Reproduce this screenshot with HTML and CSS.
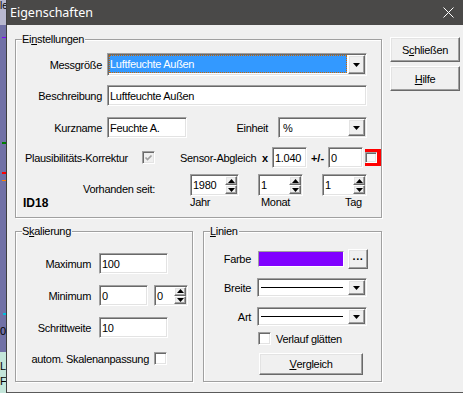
FILE: index.html
```html
<!DOCTYPE html>
<html lang="de">
<head>
    <meta charset="UTF-8">
    <title>Eigenschaften</title>
    <link rel="stylesheet" href="styles.css">
</head>
<body>

<div class="screen">
    <!-- window behind the dialog -->
    <div class="bgwin">
        <div class="bg-top">le</div>
        <div class="bg-chart">
            <div class="mark m-violet"></div>
            <div class="mark m-green"></div>
            <div class="mark m-red"></div>
            <div class="mark m-orange"></div>
            <div class="mark m-cyan"></div>
            <div class="bg-zero">0</div>
        </div>
        <div class="bg-legend"><div>L</div><div>F</div></div>
    </div>

    <div class="dialog">
        <div class="titlebar">
            <span class="title">Eigenschaften</span>
            <svg class="close" width="11" height="11" viewBox="0 0 11 11">
                <path d="M0.5 0.5L10.5 10.5M10.5 0.5L0.5 10.5" stroke="#fff" stroke-width="1" fill="none"/>
            </svg>
        </div>

        <div class="client">
            <div class="main">
                <div class="group g-settings">
                    <div class="legend">Ei<u>n</u>stellungen</div>

                    <div class="row h23 mt7">
                        <span class="lbl lbl-set">Messgröße</span>
                        <div class="combo selected w260">
                            <div class="combo-text">Luftfeuchte Außen</div>
                            <div class="btn drop"><svg width="7" height="4" viewBox="0 0 7 4"><path d="M0 0h7L3.5 4z"/></svg></div>
                        </div>
                    </div>

                    <div class="row h21 mt9">
                        <span class="lbl lbl-set">Beschreibung</span>
                        <div class="field w260">Luftfeuchte Außen</div>
                    </div>

                    <div class="row h21 mt11">
                        <span class="lbl lbl-set">Kurzname</span>
                        <div class="field w80">Feuchte A.</div>
                        <span class="lbl lbl-unit">Einheit</span>
                        <div class="combo w89">
                            <div class="combo-text">%</div>
                            <div class="btn drop"><svg width="7" height="4" viewBox="0 0 7 4"><path d="M0 0h7L3.5 4z"/></svg></div>
                        </div>
                    </div>

                    <div class="row h21 mt9">
                        <span class="lbl lbl-plaus">Plausibilitäts-Korrektur</span>
                        <div class="chk disabled">
                            <svg width="11" height="11" viewBox="0 0 11 11"><path d="M2.5 5.5L4.5 7.5L8.5 3.5" stroke="#a0a0a0" stroke-width="1.7" fill="none"/></svg>
                        </div>
                        <span class="lbl lbl-sensor">Sensor-Abgleich</span>
                        <span class="op op-x">x</span>
                        <div class="field w35">1.040</div>
                        <span class="op op-pm">+/-</span>
                        <div class="field w35">0</div>
                        <div class="redframe"><div class="chk small"></div></div>
                    </div>

                    <div class="row h22 mt6">
                        <span class="lbl lbl-since">Vorhanden seit:</span>
                        <div class="spin w49">
                            <div class="spin-text">1980</div>
                            <div class="spin-btns">
                                <div class="btn sb"><svg width="7" height="4" viewBox="0 0 7 4"><path d="M3.5 0L7 4H0z"/></svg></div>
                                <div class="btn sb"><svg width="7" height="4" viewBox="0 0 7 4"><path d="M0 0h7L3.5 4z"/></svg></div>
                            </div>
                        </div>
                        <div class="spin w45 ml19">
                            <div class="spin-text">1</div>
                            <div class="spin-btns">
                                <div class="btn sb"><svg width="7" height="4" viewBox="0 0 7 4"><path d="M3.5 0L7 4H0z"/></svg></div>
                                <div class="btn sb"><svg width="7" height="4" viewBox="0 0 7 4"><path d="M0 0h7L3.5 4z"/></svg></div>
                            </div>
                        </div>
                        <div class="spin w45 ml19">
                            <div class="spin-text">1</div>
                            <div class="spin-btns">
                                <div class="btn sb"><svg width="7" height="4" viewBox="0 0 7 4"><path d="M3.5 0L7 4H0z"/></svg></div>
                                <div class="btn sb"><svg width="7" height="4" viewBox="0 0 7 4"><path d="M0 0h7L3.5 4z"/></svg></div>
                            </div>
                        </div>
                    </div>

                    <div class="row h13">
                        <span class="id">ID18</span>
                        <span class="cap cap-year">Jahr</span>
                        <span class="cap cap-month">Monat</span>
                        <span class="cap cap-day">Tag</span>
                    </div>
                </div>

                <div class="lower">
                    <div class="group g-scale">
                        <div class="legend">S<u>k</u>alierung</div>

                        <div class="row h21 mt15">
                            <span class="lbl lbl-scale">Maximum</span>
                            <div class="field w69">100</div>
                        </div>
                        <div class="row h21 mt11">
                            <span class="lbl lbl-scale">Minimum</span>
                            <div class="field w49">0</div>
                            <div class="spin w34 ml6">
                                <div class="spin-text">0</div>
                                <div class="spin-btns">
                                    <div class="btn sb"><svg width="7" height="4" viewBox="0 0 7 4"><path d="M3.5 0L7 4H0z"/></svg></div>
                                    <div class="btn sb"><svg width="7" height="4" viewBox="0 0 7 4"><path d="M0 0h7L3.5 4z"/></svg></div>
                                </div>
                            </div>
                        </div>
                        <div class="row h21 mt11">
                            <span class="lbl lbl-scale">Schrittweite</span>
                            <div class="field w69">10</div>
                        </div>
                        <div class="row h13 mt14">
                            <span class="lbl lbl-auto">autom. Skalenanpassung</span>
                            <div class="chk"></div>
                        </div>
                    </div>

                    <div class="group g-lines">
                        <div class="legend"><u>L</u>inien</div>

                        <div class="row h20 mt11">
                            <span class="lbl lbl-line">Farbe</span>
                            <div class="swatch"></div>
                            <div class="btn dots">···</div>
                        </div>
                        <div class="row h19 mt9">
                            <span class="lbl lbl-line">Breite</span>
                            <div class="combo w110 ml6">
                                <div class="combo-text"><div class="stroke"></div></div>
                                <div class="btn drop"><svg width="7" height="4" viewBox="0 0 7 4"><path d="M0 0h7L3.5 4z"/></svg></div>
                            </div>
                        </div>
                        <div class="row h19 mt10">
                            <span class="lbl lbl-line">Art</span>
                            <div class="combo w110 ml6">
                                <div class="combo-text"><div class="stroke"></div></div>
                                <div class="btn drop"><svg width="7" height="4" viewBox="0 0 7 4"><path d="M0 0h7L3.5 4z"/></svg></div>
                            </div>
                        </div>
                        <div class="row h13 mt6 check-row">
                            <div class="chk"></div>
                            <span class="check-label">Verlauf glätten</span>
                        </div>
                        <div class="row mt8">
                            <div class="btn compare"><u>V</u>ergleich</div>
                        </div>
                    </div>
                </div>
            </div>

            <div class="side">
                <div class="btn cmd">S<u>c</u>hließen</div>
                <div class="btn cmd"><u>H</u>ilfe</div>
            </div>
        </div>
    </div>
</div>

</body>
</html>
```

FILE: styles.css
```css
body {
    margin: 0;
    font-family: "Liberation Sans", Arial, sans-serif;
    font-size: 11px;
    letter-spacing: -0.3px;
    color: #000;
    background: #f0f0f0;
    overflow: hidden;
}
.screen {
    display: flex;
    width: 463px;
    height: 393px;
}

/* background window */
.bgwin {
    width: 6px;
    flex: none;
    display: flex;
    flex-direction: column;
    background: #7171a6;
    overflow: hidden;
}
.bg-top {
    height: 25px;
    background: #b8b8cf;
    line-height: 11px;
    letter-spacing: 0;
    font-size: 10px;
}
.bg-chart {
    height: 327px;
}
.mark {
    margin-left: 2px;
    height: 1px;
}
.m-violet { margin-top: 12px; background: #8000ff; }
.m-green { margin-top: 104px; height: 2px; background: #008000; }
.m-red { margin-top: 28px; height: 2px; background: #ff0000; }
.m-orange { margin-top: 6px; background: #ff8000; }
.m-cyan { margin-top: 132px; margin-left: 3px; height: 2px; background: #00c0e0; }
.bg-zero {
    margin-top: 11px;
    line-height: 11px;
    letter-spacing: 0;
}
.bg-legend {
    flex: 1;
    background: #c4e6da;
    padding-top: 7px;
    line-height: 15px;
    letter-spacing: 0;
}

/* dialog frame */
.dialog {
    flex: 1;
    min-width: 0;
    display: flex;
    flex-direction: column;
    border-left: 1px solid #3e3e3e;
    border-bottom: 1px solid #5a5a5a;
}
.titlebar {
    height: 25px;
    flex: none;
    display: flex;
    align-items: center;
    padding-left: 3px;
    background: #4a4948;
    color: #fff;
    font-family: "Noto Sans", sans-serif;
    font-size: 12.5px;
    letter-spacing: 0;
}
.close {
    margin-left: auto;
    margin-right: 9px;
}
.client {
    flex: 1;
    display: flex;
    align-items: flex-start;
    padding: 12px 0 0 8px;
    background: #f0f0f0;
}
.main {
    width: 367px;
    margin-top: 2px;
}
.side {
    margin-left: 8px;
    display: flex;
    flex-direction: column;
    gap: 4px;
}
.lower {
    display: flex;
    gap: 10px;
    margin-top: 13px;
}

/* group boxes */
.group {
    box-sizing: border-box;
    border: 1px solid #a0a0a0;
    box-shadow: 1px 1px 0 #fff, inset 1px 1px 0 #fff;
}
.g-settings { height: 179px; }
.g-scale { width: 178px; height: 151px; }
.g-lines { width: 179px; height: 151px; }
.legend {
    display: table;
    height: 13px;
    line-height: 13px;
    margin: -7px 0 0 6px;
    padding-right: 1px;
    background: #f0f0f0;
}

.row {
    display: flex;
    align-items: center;
}
.h13 { height: 13px; }
.h19 { height: 19px; }
.h20 { height: 20px; }
.h21 { height: 21px; }
.h22 { height: 22px; }
.h23 { height: 23px; }
.mt6 { margin-top: 6px; }
.mt7 { margin-top: 7px; }
.mt8 { margin-top: 8px; }
.mt9 { margin-top: 9px; }
.mt10 { margin-top: 10px; }
.mt11 { margin-top: 11px; }
.mt14 { margin-top: 14px; }
.mt15 { margin-top: 15px; }
.ml6 { margin-left: 6px; }
.ml19 { margin-left: 19px; }

.lbl {
    flex: none;
    white-space: nowrap;
    box-sizing: border-box;
}
.lbl-set { width: 86px; margin-right: 5px; text-align: right; }
.lbl-unit { width: 91px; padding-right: 10px; text-align: right; }
.lbl-plaus { width: 117px; margin-left: 9px; }
.lbl-sensor { width: 80px; margin-left: 25px; }
.lbl-since { width: 174px; padding-left: 67px; align-self: flex-end; line-height: 13px; }
.lbl-scale { width: 75px; margin-right: 8px; text-align: right; }
.lbl-auto { width: 133px; margin-right: 5px; text-align: right; }
.lbl-line { width: 47px; text-align: right; }

.op {
    flex: none;
    font-weight: bold;
    text-align: center;
    letter-spacing: 0;
}
.op-x { width: 10px; margin-right: 2px; }
.op-pm { width: 21px; }

.id {
    width: 174px;
    padding-left: 7px;
    box-sizing: border-box;
    font-size: 12px;
    font-weight: bold;
    letter-spacing: 0;
}
.cap { box-sizing: border-box; line-height: 13px; }
.cap-year { width: 68px; }
.cap-month { width: 64px; padding-left: 3px; }
.cap-day { width: 45px; padding-left: 23px; }

/* controls */
.field, .combo, .spin, .chk {
    box-sizing: border-box;
    flex: none;
    background: #fff;
    border: 1px solid;
    border-color: #a0a0a0 #fff #fff #a0a0a0;
    box-shadow: inset 1px 1px 0 #696969, inset -1px -1px 0 #e3e3e3;
}
.field {
    height: 100%;
    display: flex;
    align-items: center;
    padding: 0 2px;
    white-space: nowrap;
    overflow: hidden;
}
.w35 { width: 35px; }
.w45 { width: 45px; }
.w49 { width: 49px; }
.w34 { width: 34px; }
.w69 { width: 69px; }
.w80 { width: 80px; }
.w89 { width: 89px; }
.w110 { width: 110px; }
.w260 { width: 260px; }

.combo {
    height: 100%;
    display: flex;
    padding: 1px;
}
.combo-text {
    flex: 1;
    display: flex;
    align-items: center;
    padding-left: 3px;
    margin-right: 1px;
    white-space: nowrap;
    overflow: hidden;
}
.selected .combo-text {
    padding-left: 0;
    margin: 0 1px 1px 0;
    background: #3399ff;
    color: #fff;
    border: 1px dotted #cc6600;
}
.stroke {
    flex: 1;
    height: 1px;
    margin: 0 4px 0 -1px;
    background: #000;
}

.btn {
    box-sizing: border-box;
    flex: none;
    display: flex;
    align-items: center;
    justify-content: center;
    background: #f0f0f0;
    border: 1px solid;
    border-color: #fff #696969 #696969 #fff;
    box-shadow: inset -1px -1px 0 #a0a0a0, inset 1px 1px 0 #e3e3e3;
}
.drop { width: 17px; }
.cmd { width: 70px; height: 25px; }
.compare { width: 104px; height: 22px; margin-left: 55px; }
.dots {
    width: 20px;
    height: 20px;
    margin-left: 4px;
    font-weight: bold;
    letter-spacing: 0;
}

.spin {
    height: 100%;
    display: flex;
    padding: 1px;
}
.spin-text {
    flex: 1;
    display: flex;
    align-items: center;
    padding-left: 1px;
}
.spin-btns {
    width: 12px;
    display: flex;
    flex-direction: column;
}
.sb { flex: 1; }

.chk {
    width: 13px;
    height: 13px;
    display: flex;
    align-items: center;
    justify-content: center;
}
.chk.disabled { background: #f0f0f0; }
.chk.small { width: 12px; height: 11px; background: #f8f8f8; }
.redframe {
    box-sizing: border-box;
    width: 16px;
    height: 17px;
    margin-left: 2px;
    display: flex;
    align-items: center;
    border: 3px solid #ff0000;
    border-right-width: 4px;
    border-left: none;
}

.swatch {
    box-sizing: border-box;
    width: 86px;
    height: 16px;
    margin-left: 7px;
    background: #8000ff;
    border: 1px solid;
    border-color: #a0a0a0 #fff #fff #a0a0a0;
}
.check-row { padding-left: 54px; }
.check-label { margin-left: 5px; }
```
